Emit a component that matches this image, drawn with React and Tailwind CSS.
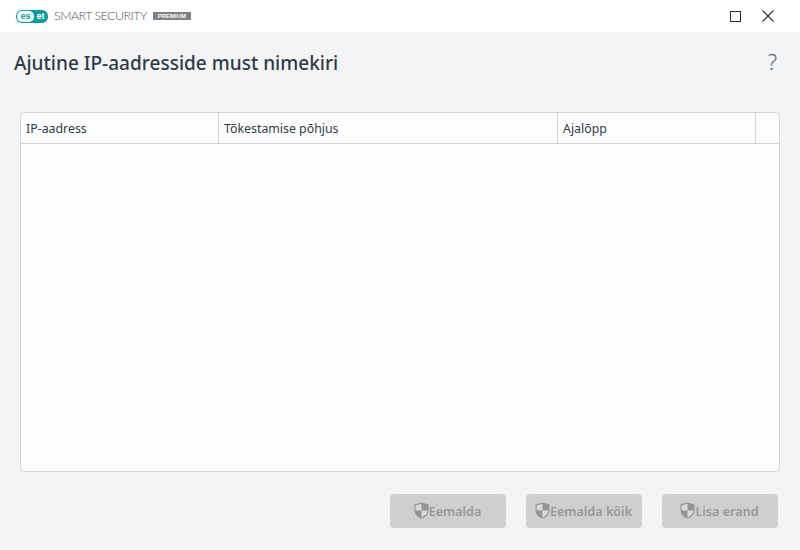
import React from 'react';

const ShieldIcon = () => (
  <svg width="15" height="17" viewBox="0 0 15 17" className="shrink-0 -mt-[2px] -ml-px">
    <path d="M7.5 0.5 L14.5 2.6 V8.5 C14.5 12.2 11.2 15.3 7.5 16.5 C3.8 15.3 0.5 12.2 0.5 8.5 V2.6 Z" fill="#949494" />
    <path d="M7.5 1.8 V8.5 H1.6 V3.5 Z M7.5 8.5 H13.4 C13.2 11.7 10.5 14.2 7.5 15.4 Z" fill="#dadada" />
  </svg>
);

const ActionButton = ({ label }) => (
  <button className="w-[116px] h-[34px] flex items-center justify-center bg-[#cfcfcf] rounded text-[12.6px] font-semibold text-[#999999]">
    <ShieldIcon />
    <span className="mt-[2px]">{label}</span>
  </button>
);

const App = () => {
  return (
    <div className="w-[800px] h-[550px] flex flex-col overflow-hidden bg-[#f3f4f6] font-['Noto_Sans',sans-serif]">
      {/* Title bar */}
      <header className="h-8 shrink-0 bg-white flex items-center justify-between pl-4 pr-[26px]">
        <div className="flex items-center">
          <div className="w-8 h-[13px] bg-[#0b9ba0] rounded-[6px] flex items-center p-px font-['Liberation_Sans',sans-serif] text-[9px] leading-none font-bold">
            <span className="w-[17px] h-[11px] bg-white rounded-[5px] flex items-center justify-center text-[#0b9ba0]">es</span>
            <span className="flex-1 text-center text-white">et</span>
          </div>
          <span className="ml-[6px] text-[12.5px] tracking-[-0.55px] font-light text-[#4f5154] font-['Lato',sans-serif]">SMART SECURITY</span>
          <span className="ml-[6px] w-[38px] h-2 bg-[#7d8084] flex items-center justify-center text-[6px] leading-none font-bold text-white font-['Liberation_Sans',sans-serif]">PREMIUM</span>
        </div>
        <div className="flex items-center gap-[21px]">
          <div className="w-[11px] h-[11px] border border-[#2d2d2d] box-border" />
          <svg width="12" height="12" viewBox="0 0 12 12">
            <path d="M0.5 0.5 L11.5 11.5 M11.5 0.5 L0.5 11.5" stroke="#2d2d2d" strokeWidth="1.1" />
          </svg>
        </div>
      </header>

      <main className="flex-1 flex flex-col px-5">
        {/* Heading */}
        <div className="h-[80px] shrink-0 flex items-start justify-between -ml-1.5 pt-[17px] pr-[3px]">
          <h1 className="text-[19.05px] leading-[28px] font-medium text-[#2f3a45]">Ajutine IP-aadresside must nimekiri</h1>
          <span className="text-[22px] leading-[28px] -mt-0.5 font-light text-[#5b6670]">?</span>
        </div>

        {/* Table */}
        <section className="h-[360px] shrink-0 bg-[#fdfdfd] border border-[#d5d5d5] rounded flex flex-col">
          <div className="h-[31px] shrink-0 flex border-b border-[#d5d5d5] text-[12.35px] text-[#333c45]">
            <div className="w-[198px] flex items-center pt-0.5 px-[5px] border-r border-[#d5d5d5]">IP-aadress</div>
            <div className="w-[339px] flex items-center pt-0.5 px-[5px] border-r border-[#d5d5d5]">Tõkestamise põhjus</div>
            <div className="w-[198px] flex items-center pt-0.5 px-[5px] border-r border-[#d5d5d5]">Ajalõpp</div>
            <div className="flex-1" />
          </div>
        </section>

        {/* Actions */}
        <div className="mt-[22px] flex justify-end gap-5 pr-[2px]">
          <ActionButton label="Eemalda" />
          <ActionButton label="Eemalda kõik" />
          <ActionButton label="Lisa erand" />
        </div>
      </main>
    </div>
  );
};

export default App;
